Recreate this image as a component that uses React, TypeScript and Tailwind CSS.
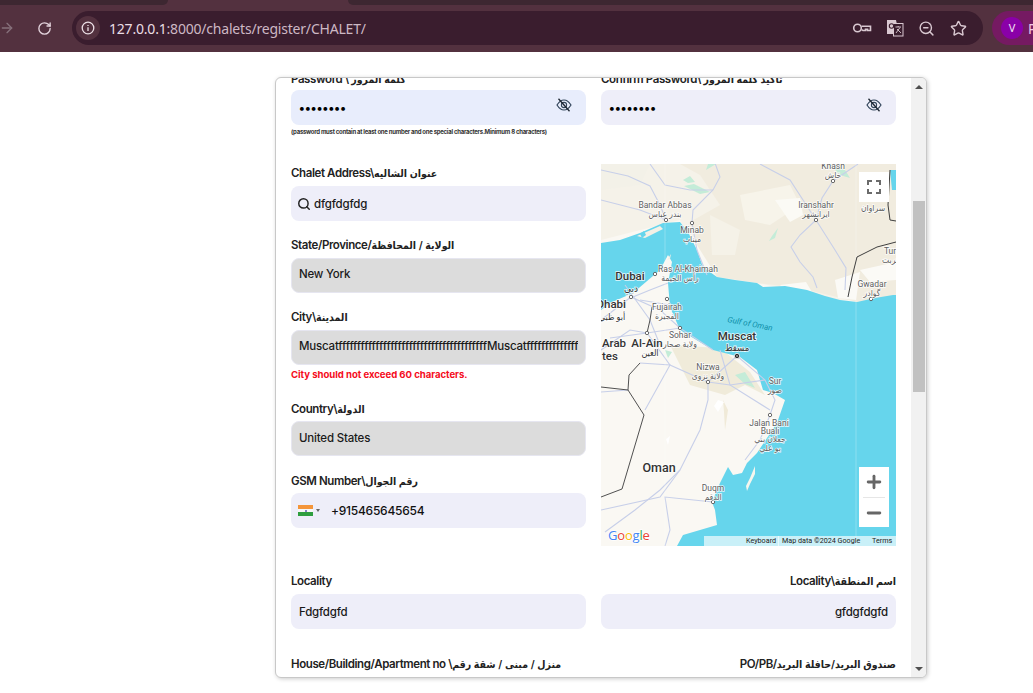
import React from "react";
import { Search, ArrowRight, RotateCw, Star, ZoomOut, Plus, Minus } from "lucide-react";

const ui = { fontFamily: "Inter, 'DejaVu Sans Condensed', 'DejaVu Sans', sans-serif" };

function Ar({ children }: { children: React.ReactNode }) {
  return <span className="text-[10.5px] tracking-[-0.5px]">{children}</span>;
}

function Label({ children, right }: { children: React.ReactNode; right?: boolean }) {
  return (
    <div className={`h-[16px] text-[11.5px] leading-[18px] font-semibold text-[#222222] whitespace-nowrap tracking-[-0.4px] ${right ? "text-right" : ""}`}>
      {children}
    </div>
  );
}

function Box({ children, gray, auto, right }: { children?: React.ReactNode; gray?: boolean; auto?: boolean; right?: boolean }) {
  const bg = gray ? "bg-[#dcdcdc] border border-[#e6e6f0] px-[7px] pb-[1px]" : auto ? "bg-[#e8edfc] px-2" : "bg-[#eeeef9] px-2";
  return (
    <div className={`h-[35px] rounded-[8px] ${bg} flex items-center text-[11.5px] tracking-[-0.2px] font-medium text-[#1a1a1a] overflow-hidden whitespace-nowrap ${right ? "justify-end" : ""}`}>
      {children}
    </div>
  );
}

function EyeOffIcon() {
  return (
    <svg width="16" height="14" viewBox="0 0 16 14" fill="none" className="shrink-0">
      <path d="M1 7 C3.5 3 6 2 8 2 C10 2 12.5 3 15 7 C12.5 11 10 12 8 12 C6 12 3.5 11 1 7Z" stroke="#33465c" strokeWidth="1.2" />
      <circle cx="8" cy="7" r="2.6" stroke="#33465c" strokeWidth="1.1" />
      <path d="M2.5 0.8 L13.5 13.2" stroke="#1c2530" strokeWidth="1.3" />
    </svg>
  );
}

function PasswordBox({ auto }: { auto?: boolean }) {
  return (
    <Box auto={auto}>
      <span className="flex-1 text-[12px] tracking-[0.2px] text-black font-bold">••••••••</span>
      <span className="mr-[6px] -mt-[6px]"><EyeOffIcon /></span>
    </Box>
  );
}

type L = [string, number, number];
const labels: L[] = [
  ["Khash", 833, 169],
  ["خاش", 833, 178],
  ["Bandar Abbas", 665, 208],
  ["بندر عباس", 665, 217],
  ["Minab", 692, 233],
  ["ميناب", 692, 242],
  ["Iranshahr", 816, 208],
  ["ایرانشهر", 816, 217],
  ["سراوان", 873, 211],
  ["Tur", 890, 254],
  ["تربت", 890, 263],
  ["Gwadar", 872, 287],
  ["گوادر", 872, 296],
  ["Ras Al-Khaimah", 688, 272],
  ["رأس الخيمة", 680, 281],
  ["Fujairah", 667, 310],
  ["الفجيرة", 667, 319],
  ["Sohar", 680, 338],
  ["ولاية صحار", 680, 347],
  ["Nizwa", 708, 370],
  ["ولاية نزوى", 708, 379],
  ["Sur", 775, 384],
  ["صور", 775, 393],
  ["Jalan Bani", 769, 426],
  ["Buali", 770, 434],
  ["جعلان بني", 770, 442],
  ["بو علي", 770, 451],
  ["Duqm", 713, 491],
  ["الدقم", 713, 500],
];
const bold: [string, number, number, number, boolean?][] = [
  ["Dubai", 630, 280, 11.5],
  ["دبي", 631, 292, 10],
  ["Dhabi", 626, 308, 11.5, true],
  ["أبو ظبي", 612, 320, 9],
  ["Arab", 614, 347, 11.5],
  ["tes", 610, 360, 11.5],
  ["Al-Ain", 647, 347, 11.5],
  ["العين", 650, 356, 9],
  ["Muscat", 737, 340, 11.5],
  ["مسقط", 737, 351, 9.5],
  ["Oman", 659, 472, 12.5],
];
const dots: [number, number][] = [
  [833, 181], [666, 220], [692, 223], [816, 220], [871, 299], [655, 274], [667, 299], [680, 328], [647, 333], [708, 382], [770, 415], [713, 502], [631, 297],
];
const roads = [
  "M601 170 L628 176 L650 186 L660 205 L666 220",
  "M650 164 L665 185 L690 190 L713 190",
  "M715 163 L720 177 L713 190 L693 210 L692 223 L697 250 L707 275",
  "M760 164 L790 180 L816 220",
  "M816 220 L800 235 L791 247 L800 262 L813 277 L817 288",
  "M816 220 L835 250 L846 268 L845 290",
  "M816 220 L822 198 L833 181 L858 164",
  "M601 200 L640 210 L666 220",
  "M633 297 L650 290 L668 283",
  "M601 320 L631 297 L660 310 L680 328",
  "M610 338 L647 333 L680 328 L713 350",
  "M601 350 L630 330 L647 333 L670 365 L708 382",
  "M625 285 L650 320 L660 345",
  "M640 300 L670 305",
  "M737 356 L708 382 L708 400 L700 430 L680 470 L660 490 L635 510 L605 532",
  "M737 356 L765 380 L775 400 L770 415 L760 440 L745 460",
  "M708 382 L730 385 L765 380",
  "M720 350 L730 385 L770 410",
  "M713 502 L665 497 L670 530 L665 546",
  "M640 363 L670 365 L645 410",
  "M601 392 L628 390",
  "M601 510 L660 497 L680 470",
];

function MapArt() {
  return (
    <svg viewBox="601 164 295 382" width="295" height="382" className="block" style={{ fontFamily: "Roboto, 'DejaVu Sans Condensed', 'DejaVu Sans', sans-serif" }}>
      <rect x="601" y="164" width="295" height="382" fill="#faf8f3" />
      <path d="M601 164 H896 V300 L840 300 L757 283 L690 240 L680 220 L601 240Z" fill="#f5f2e9" />
      <path d="M680 164 H896 V296 L857 302 L800 288 L757 283 L717 277 L697 245 L690 222 L720 205 L700 175Z" fill="#f1ecdf" />
      <path d="M740 195 L790 185 L800 205 L770 225 L745 220Z" fill="#f7f4ea" />
      <path d="M775 200 L800 198 L803 215 L790 222 Z" fill="#fbfaf5" />
      <path d="M710 215 L740 230 L735 255 L712 255Z" fill="#f5f2e8" />
      <path d="M780 285 L806 282 L812 292 L785 290Z M835 280 L860 272 L856 300 L838 298Z M860 270 L896 262 V280 L870 282Z" fill="#fbfaf6" />
      <path d="M670 345 L720 348 L750 372 L765 395 L745 385 L725 395 L690 385 L680 365Z" fill="#f0ebda" />
      <path d="M601 164 H650 L640 185 L601 190Z" fill="#f3f1e8" />
      <path d="M601 243 L620 240 L640 233 L663 223 L680 222 L688 232 L692 240 L697 250 L703 267 L717 277 L735 280 L757 283 L763 287 L785 286 L807 290 L825 296 L840 300 L857 302 L875 298 L893 295 L896 295 V546 H677 L683 535 L717 525 L715 510 L712 502 L720 483 L728 467 L733 475 L742 473 L747 463 L757 453 L777 423 L785 400 L773 393 L763 390 L757 370 L740 357 L713 350 L680 330 L670 307 L668 283 L672 262 L668 255 L660 270 L633 293 L610 303 L601 310Z" fill="#66d5ec" />
      <path d="M890 170 H896 V190 L892 190Z" fill="#66d5ec" />
      <path d="M637 236 L660 226 L663 229 L645 238Z" fill="#f3f0e6" />
      <path d="M640 234 L644 231 L646 235 L642 238Z" fill="#66d5ec" />
      <path d="M746 486 L750 478 L755 466 L755 474 L750 484 L747 491Z" fill="#f5f6ee" />
      <path d="M667 260 L671 254 L670 259 Z" fill="#f3f0e6" />
      <path d="M683 180 L690 176 L695 182 L688 183Z M684 186 L694 184 L710 192 L700 194Z M772 236 L778 228 L775 238 L769 241Z M716 164 L708 164 L706 170Z M830 164 L845 170 L850 178 L840 175Z" fill="#c4ecd8" />
      <path d="M735 375 L745 372 L755 388 L745 384Z M665 350 L672 352 L668 358Z" fill="#c4ecd8" />
      <path d="M723 400 L728 410 L725 430 L724 412Z" fill="#f0ead8" />
      <path d="M666 439 L670 436 L668 445Z M718 400 L724 402 L718 412 L714 406Z" fill="#ffffff" />
      {roads.map((d, i) => (
        <path key={i} d={d} fill="none" stroke="#c7cfe9" strokeWidth="1.1" />
      ))}
      <path d="M665 164 V546 M856 164 V546" stroke="#ffffff" strokeOpacity="0.25" strokeWidth="1" />
      <path d="M890 170 L888 205 L890 220 L896 221 M896 242 L877 247 L857 257 L852 277 L848 297" fill="none" stroke="#3f3f3f" strokeWidth="1" />
      <path d="M652 307 L650 320 L647 333 M601 387 L628 390 L644 415 L622 489 L601 497 M640 363 L629 375 L628 390" fill="none" stroke="#505050" strokeWidth="1" />
      {dots.map(([x, y], i) => (
        <circle key={i} cx={x} cy={y} r="1.7" fill="#ffffff" stroke="#5a5a5a" strokeWidth="0.9" />
      ))}
      <circle cx="737" cy="356" r="2.6" fill="#222222" stroke="#ffffff" strokeWidth="0.8" />
      <circle cx="737" cy="356" r="0.8" fill="#ffffff" />
      {labels.map(([t, x, y], i) => (
        <text key={i} x={x} y={y} textAnchor="middle" fontSize="8.5" fill="#5f5f5f" stroke="#ffffff" strokeWidth="1.5" strokeOpacity="0.85" style={{ paintOrder: "stroke" }}>{t}</text>
      ))}
      {bold.map(([t, x, y, s, end], i) => (
        <text key={i} x={x} y={y} textAnchor={end ? "end" : "middle"} fontSize={s} fontWeight="500" fill="#333333" stroke="#ffffff" strokeWidth="1.5" strokeOpacity="0.85" style={{ paintOrder: "stroke" }}>{t}</text>
      ))}
      <text x="727" y="322" fontSize="8" fontStyle="italic" fill="#0e8ea8" transform="rotate(11 727 322)">Gulf of Oman</text>
      <text x="608" y="540" fontSize="13" fontWeight="500" stroke="#ffffff" strokeWidth="1.5" letterSpacing="-0.2" style={{ paintOrder: "stroke", fontFamily: "'Open Sans', Roboto, sans-serif" }}>
        <tspan fill="#4285f4">G</tspan><tspan fill="#ea4335">o</tspan><tspan fill="#fbbc05">o</tspan><tspan fill="#4285f4">g</tspan><tspan fill="#34a853">l</tspan><tspan fill="#ea4335">e</tspan>
      </text>
      <rect x="704" y="536" width="192" height="10" fill="#ffffff" fillOpacity="0.65" />
      <text x="746" y="543" fontSize="7.2" fill="#222222">Keyboard</text>
      <rect x="778" y="536" width="1" height="10" fill="#ffffff" fillOpacity="0.6" />
      <text x="782" y="543" fontSize="7.2" fill="#222222">Map data ©2024 Google</text>
      <text x="872" y="543" fontSize="7.2" fill="#222222">Terms</text>
    </svg>
  );
}

function Map() {
  return (
    <div className="relative w-[295px] h-[382px] overflow-hidden">
      <MapArt />
      <div className="absolute left-[258px] top-[8px] w-[30px] h-[30px] bg-white flex items-center justify-center">
        <svg width="14" height="14" viewBox="0 0 14 14" fill="none" stroke="#6b6b6b" strokeWidth="2">
          <path d="M1 5 V1 H5 M9 1 H13 V5 M13 9 V13 H9 M5 13 H1 V9" />
        </svg>
      </div>
      <div className="absolute left-[258px] top-[303px] w-[30px] h-[60px] bg-white flex flex-col items-center">
        <div className="h-[30px] flex items-center justify-center"><Plus size={20} strokeWidth={3.4} color="#666666" /></div>
        <div className="w-[22px] h-px bg-[#e6e6e6]" />
        <div className="h-[29px] flex items-center justify-center"><Minus size={20} strokeWidth={3.4} color="#666666" /></div>
      </div>
    </div>
  );
}

function KeyIcon() {
  return (
    <svg width="20" height="12" viewBox="0 0 20 12" fill="none" stroke="#d9c8d1" strokeWidth="1.6">
      <circle cx="5.5" cy="6" r="3.8" />
      <path d="M9.5 4.2 H18.5 V8.5 H15.5 V7.4 H13.5 V8.5 H11 L9.5 7.6" />
    </svg>
  );
}

function TranslateIcon() {
  return (
    <svg width="18" height="18" viewBox="0 0 18 18">
      <path d="M1 1 H10 L13 15 H1Z" fill="#d9c8d1" />
      <rect x="7.5" y="4.5" width="9.5" height="12.5" fill="#3a1d2e" stroke="#d9c8d1" strokeWidth="1" />
      <path d="M9.5 8 H15 M12.2 7 V8 M10 14 L14 8.5 M11 10 L15 14" stroke="#d9c8d1" strokeWidth="0.9" fill="none" />
      <circle cx="5.5" cy="7" r="2.2" fill="none" stroke="#3a1d2e" strokeWidth="1.1" />
    </svg>
  );
}

function Chrome() {
  return (
    <div className="h-[52px] bg-[#53313f] relative shrink-0">
      <div className="h-[5px] flex">
        <div className="w-[168px] bg-[#3d2731] rounded-br-[8px]" />
        <div className="w-[180px]" />
        <div className="flex-1 bg-[#3d2731] rounded-bl-[8px]" />
      </div>
      <div className="h-[47px] flex items-start pt-[6px]">
        <div className="w-[16px] h-[34px] flex items-center justify-start">
          <ArrowRight size={16} color="#86707b" className="-ml-[1px]" />
        </div>
        <div className="w-[56px] h-[34px] flex items-center pl-[21px]">
          <RotateCw size={15} color="#e3d3dc" strokeWidth={2.2} />
        </div>
        <div className="w-[911px] h-[34px] rounded-full bg-[#3a1d2e] flex items-center pl-[4px]">
          <div className="w-[24px] h-[24px] rounded-full bg-[#53313f] flex items-center justify-center">
            <svg width="14" height="14" viewBox="0 0 14 14" fill="none" stroke="#ecdfe6" strokeWidth="1.3">
              <circle cx="7" cy="7" r="5.8" />
              <path d="M7 6.2 V10 M7 4 V5" />
            </svg>
          </div>
          <span className="ml-[9px] text-[14px] tracking-[-0.2px] text-[#cdb8c4] whitespace-nowrap" style={{ fontFamily: "'Noto Sans', sans-serif" }}>
            <span className="text-[#eadde4]">127.0.0.1</span>:8000/chalets/register/CHALET/
          </span>
          <div className="flex-1" />
          <div className="flex items-center">
            <KeyIcon />
            <span className="ml-[14px]"><TranslateIcon /></span>
            <ZoomOut size={17} color="#d9c8d1" className="ml-[14px]" />
            <Star size={17} color="#d9c8d1" strokeWidth={2} className="ml-[15px]" />
            <span className="w-[16px]" />
          </div>
        </div>
        <div className="ml-[9px] flex-1 h-[34px] rounded-l-full bg-[#751a62] flex items-center pl-[9px] overflow-hidden">
          <div className="w-[22px] h-[22px] rounded-full bg-[#8a00a8] text-[#f3e0f3] text-[11px] flex items-center justify-center shrink-0" style={{ fontFamily: "'Noto Sans', sans-serif" }}>V</div>
          <span className="ml-[5px] text-[#f0c8e8] text-[14px]" style={{ fontFamily: "'Noto Sans', sans-serif" }}>P</span>
        </div>
      </div>
    </div>
  );
}

function Scrollbar() {
  return (
    <div className="w-[15px] bg-[#f1f1f1] flex flex-col items-center shrink-0">
      <div className="h-[16px] flex items-center justify-center mt-px">
        <div className="w-0 h-0 border-l-[4px] border-r-[4px] border-b-[4px] border-l-transparent border-r-transparent border-b-[#505050]" />
      </div>
      <div className="mt-[106px] w-[12px] h-[191px] bg-[#c1c1c1]" />
      <div className="flex-1" />
      <div className="h-[16px] flex items-center justify-center">
        <div className="w-0 h-0 border-l-[4px] border-r-[4px] border-t-[4px] border-l-transparent border-r-transparent border-t-[#505050]" />
      </div>
    </div>
  );
}

function Flag() {
  return (
    <div className="w-[15px] h-[11px] flex flex-col shrink-0">
      <div className="h-[4px] bg-[#f4953a]" />
      <div className="h-[3px] bg-[#f7f7f7] flex items-center justify-center"><div className="w-[2px] h-[2px] rounded-full bg-[#5a5ab0]" /></div>
      <div className="h-[4px] bg-[#2f9e3f]" />
    </div>
  );
}

export default function App() {
  const f1 = "f".repeat(40);
  const f2 = "f".repeat(14);
  return (
    <div className="w-[1033px] h-[693px] bg-white overflow-hidden flex flex-col" style={ui}>
      <Chrome />
      <div className="pt-[25px] pl-[275px]">
        <div className="w-[652px] h-[601px] bg-white rounded-[6px] border border-[#c8c8c8] shadow-[1px_1px_4px_rgba(0,0,0,0.2)] flex overflow-hidden">
          <div className="flex-1 overflow-hidden px-[15px]">
            <div className="-mt-[8px]">
              <div className="grid grid-cols-2 gap-x-[15px]">
                <div>
                  <Label>Password \ <Ar>كلمة المرور</Ar></Label>
                  <div className="mt-[4px]"><PasswordBox auto /></div>
                </div>
                <div>
                  <Label>Confirm Password\ <Ar>تأكيد كلمة المرور</Ar></Label>
                  <div className="mt-[4px]"><PasswordBox /></div>
                </div>
              </div>
              <div className="mt-[3px] h-[8px] text-[6px] leading-[8px] font-bold text-[#333333] whitespace-nowrap tracking-[-0.27px]">
                (password must contain at least one number and one special characters.Minimum 8 characters)
              </div>
              <div className="mt-[28px] grid grid-cols-2 gap-x-[15px]">
                <div>
                  <Label>Chalet Address\<Ar>عنوان الشاليه</Ar></Label>
                  <div className="mt-[6px]">
                    <Box>
                      <Search size={14} color="#222222" strokeWidth={2.5} className="-ml-[2px] mr-[3px] shrink-0" />
                      <span className="pt-[2px]">dfgfdgfdg</span>
                    </Box>
                  </div>
                  <div className="mt-[15px]"><Label>State/Province/<Ar>الولاية / المحافظة</Ar></Label></div>
                  <div className="mt-[6px]"><Box gray>New York</Box></div>
                  <div className="mt-[15px]"><Label>City\<Ar>المدينة</Ar></Label></div>
                  <div className="mt-[6px]"><Box gray><span className="overflow-hidden">Muscat{f1}Muscat{f2}</span></Box></div>
                  <div className="mt-[4px] h-[12px] text-[9.6px] leading-[12px] font-bold text-[#f50c1c] tracking-[-0.05px]">City should not exceed 60 characters.</div>
                  <div className="mt-[19px]"><Label>Country\<Ar>الدولة</Ar></Label></div>
                  <div className="mt-[5px]"><Box gray><span className="pt-[2px]">United States</span></Box></div>
                  <div className="mt-[16px]"><Label>GSM Number\<Ar>رقم الجوال</Ar></Label></div>
                  <div className="mt-[5px]">
                    <Box>
                      <span className="-ml-[1px]"><Flag /></span>
                      <span className="ml-[3px] w-0 h-0 border-l-[2px] border-r-[2px] border-t-[3px] border-l-transparent border-r-transparent border-t-[#666666]" />
                      <span className="ml-[11px] text-[12px] tracking-[-0.25px] font-medium text-[#111111]">+915465645654</span>
                    </Box>
                  </div>
                </div>
                <Map />
              </div>
              <div className="mt-[26px] grid grid-cols-2 gap-x-[15px]">
                <div>
                  <Label>Locality</Label>
                  <div className="mt-[6px]"><Box><span className="pt-[2px]">Fdgfdgfd</span></Box></div>
                </div>
                <div>
                  <Label right>Locality\<Ar>اسم المنطقة</Ar></Label>
                  <div className="mt-[6px]"><Box right><span className="pt-[2px]">gfdgfdgfd</span></Box></div>
                </div>
              </div>
              <div className="mt-[26px] grid grid-cols-2 gap-x-[15px]">
                <Label>House/Building/Apartment no \<Ar>منزل / مبنى / شقة رقم</Ar></Label>
                <Label right>PO/PB/<Ar>صندوق البريد/حافلة البريد</Ar></Label>
              </div>
            </div>
          </div>
          <Scrollbar />
        </div>
      </div>
    </div>
  );
}
